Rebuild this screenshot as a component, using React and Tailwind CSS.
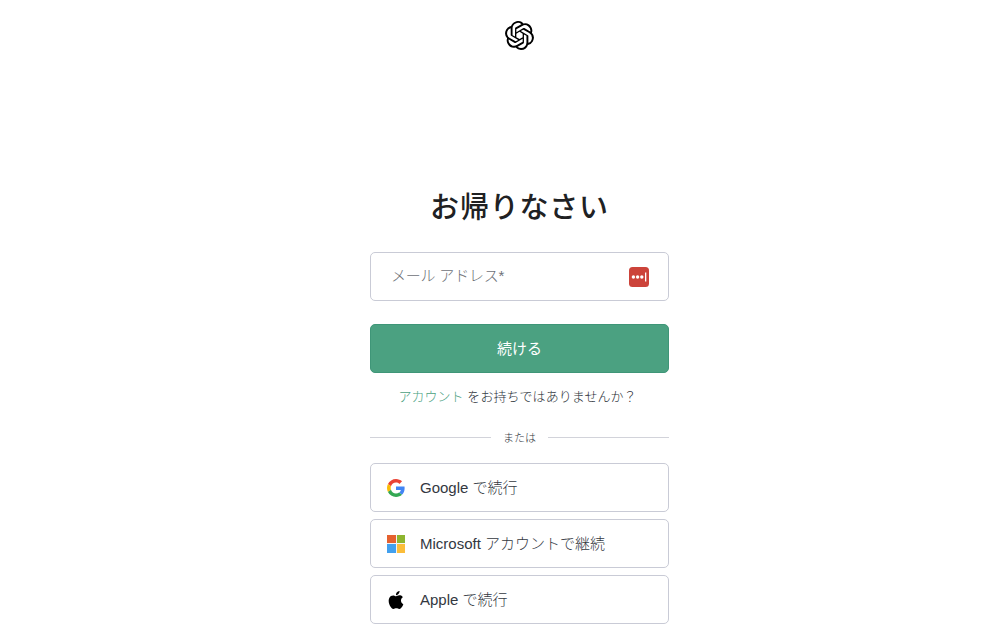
import React from "react";
import { SiOpenai, SiApple } from "react-icons/si";

const font = "[font-family:'Liberation_Sans','Noto_Sans_CJK_JP',sans-serif]";

function GoogleIcon() {
  return (
    <svg width="18" height="18" viewBox="0 0 48 48">
      <path fill="#EA4335" d="M24 9.5c3.54 0 6.71 1.22 9.21 3.6l6.85-6.85C35.9 2.38 30.47 0 24 0 14.62 0 6.51 5.38 2.56 13.22l7.98 6.19C12.43 13.72 17.74 9.5 24 9.5z" />
      <path fill="#4285F4" d="M46.98 24.55c0-1.57-.15-3.09-.38-4.55H24v9.02h12.94c-.58 2.96-2.26 5.48-4.78 7.18l7.73 6c4.51-4.18 7.09-10.36 7.09-17.65z" />
      <path fill="#FBBC05" d="M10.53 28.59c-.48-1.45-.76-2.99-.76-4.59s.27-3.14.76-4.59l-7.98-6.19C.92 16.46 0 20.12 0 24c0 3.88.92 7.54 2.56 10.78l7.97-6.19z" />
      <path fill="#34A853" d="M24 48c6.48 0 11.93-2.13 15.89-5.81l-7.73-6c-2.15 1.45-4.92 2.3-8.16 2.3-6.26 0-11.57-4.22-13.47-9.91l-7.98 6.19C6.51 42.62 14.62 48 24 48z" />
    </svg>
  );
}

function MicrosoftIcon() {
  return (
    <div className="grid h-[18px] w-[18px] grid-cols-2 gap-px bg-[#f3f3f3]">
      <div className="bg-[#e5612f]" />
      <div className="bg-[#8db52f]" />
      <div className="bg-[#42a0ee]" />
      <div className="bg-[#fbbd3a]" />
    </div>
  );
}

function PasswordIcon() {
  return (
    <svg width="20" height="20" viewBox="0 0 20 20">
      <rect width="20" height="20" rx="3.5" fill="#cc433a" />
      <circle cx="4.4" cy="10" r="1.7" fill="#fff" />
      <circle cx="8.6" cy="10" r="1.7" fill="#fff" />
      <circle cx="12.8" cy="10" r="1.7" fill="#fff" />
      <rect x="16" y="5.5" width="1.3" height="9" fill="#fff" />
    </svg>
  );
}

function Social({ icon, label }) {
  return (
    <button className="flex h-[49px] w-full items-center rounded-[5px] border border-[#c9cbd6] bg-white pl-4 text-[15px] font-light text-[#33383f]">
      <span className="flex w-[18px] items-center justify-center">{icon}</span>
      <span className="ml-[15px] pt-px">{label}</span>
    </button>
  );
}

export default function App() {
  return (
    <div className={`flex h-[634px] w-full flex-col items-center overflow-hidden bg-white pl-[39px] ${font}`}>
      <header className="flex justify-center pt-[21px]">
        <SiOpenai className="h-[29px] w-[29px] text-black" />
      </header>
      <main className="mt-[139px] flex w-[299px] flex-col">
        <h1 className="text-center text-[29px] leading-[38px] font-medium tracking-[0.8px] text-[#202123]">お帰りなさい</h1>
        <div className="mt-[25px] flex h-[49px] items-center justify-between rounded-[5px] border border-[#c9cbd6] bg-white pr-[19px] pl-5">
          <span className="text-[15px] font-light tracking-[-0.2px] text-[#6e7178]">メール アドレス*</span>
          <PasswordIcon />
        </div>
        <button className="mt-[23px] h-[49px] rounded-[5px] border border-[#3f9678] bg-[#4ba181] pt-px text-[15px] text-white">続ける</button>
        <p className="mt-[14px] pr-1 text-center text-[13px] leading-[20px] font-light tracking-[0.05px] text-[#2d333a]">
          <span className="text-[#4ba181]">アカウント</span> をお持ちではありませんか？
        </p>
        <div className="mt-[30px] flex items-center">
          <div className="h-px flex-1 bg-[#d2d3da]" />
          <span className="px-3 text-[11px] leading-[0px] font-light text-[#2d333a]">または</span>
          <div className="h-px flex-1 bg-[#d2d3da]" />
        </div>
        <div className="mt-[25px] flex flex-col gap-[7px]">
          <Social icon={<GoogleIcon />} label="Google で続行" />
          <Social icon={<MicrosoftIcon />} label="Microsoft アカウントで継続" />
          <Social icon={<SiApple className="h-[18px] w-[18px] text-black" />} label="Apple で続行" />
        </div>
      </main>
    </div>
  );
}
